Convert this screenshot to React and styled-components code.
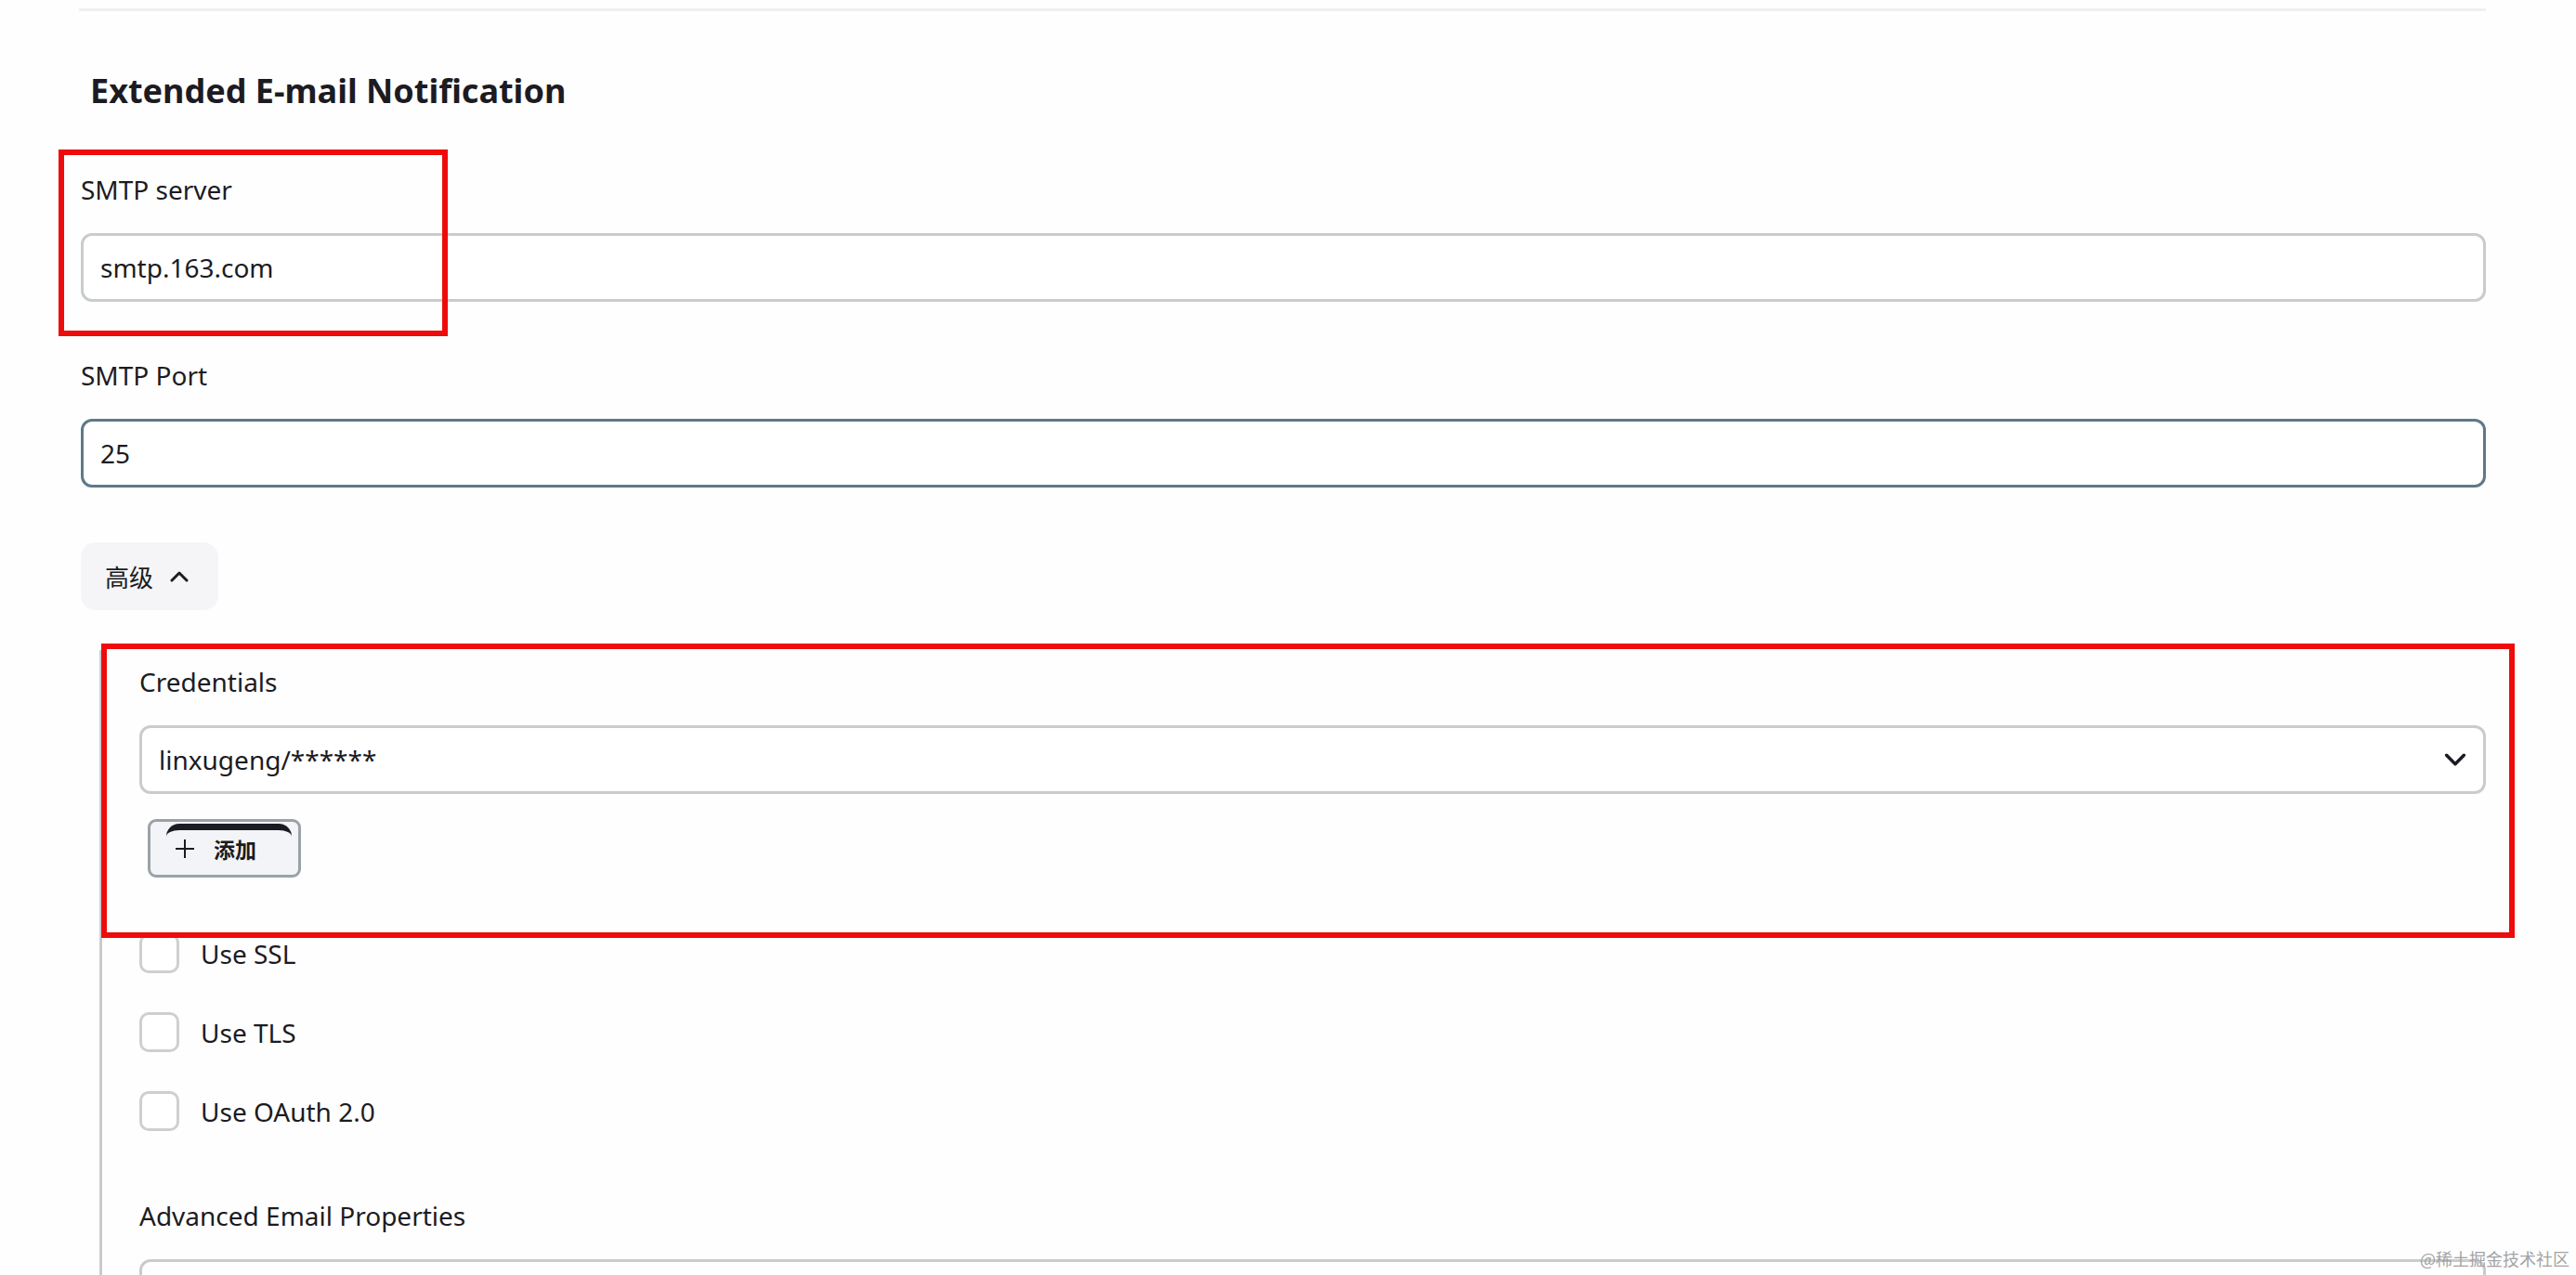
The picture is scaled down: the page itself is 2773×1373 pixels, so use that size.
import React from "react";
import styled, { createGlobalStyle } from "styled-components";

const Global = createGlobalStyle`
  html, body {
    margin: 0;
    padding: 0;
    background: #fefefe;
    overflow: hidden;
  }
  body {
    font-family: "Noto Sans", "Noto Sans CJK SC", sans-serif;
    color: #1c1b22;
  }
  * { box-sizing: border-box; }
`;

const Page = styled.div`
  position: relative;
  height: 1373px;
  padding: 0 97px 0 87px;
  overflow: hidden;
`;

const Separator = styled.div`
  margin: 9px 0 0 -2px;
  height: 3px;
  background: #eff0f2;
`;

const Heading = styled.h2`
  margin: 62px 0 0 10px;
  font-size: 36px;
  font-weight: 700;
  line-height: 48px;
`;

const Field = styled.div`
  position: relative;
  margin-top: ${(p) => p.$mt || 59}px;
`;

const Label = styled.div`
  font-size: 28px;
  line-height: 40px;
  margin-bottom: 27px;
`;

const Input = styled.div`
  height: 74px;
  border: 3px solid ${(p) => (p.$focused ? "#5e7989" : "#c9ccce")};
  border-radius: 12px;
  background: #fff;
  display: flex;
  align-items: center;
  padding: 0 18px;
  font-size: 28px;
  justify-content: space-between;
`;

const RedMark = styled.div`
  position: absolute;
  border: 6px solid #ee0b0b;
  pointer-events: none;
  z-index: 2;
  left: ${(p) => p.$l}px;
  top: ${(p) => p.$t}px;
  width: ${(p) => p.$w};
  height: ${(p) => p.$h}px;
`;

const AdvancedButton = styled.div`
  margin-top: 59px;
  width: 148px;
  height: 73px;
  border-radius: 16px;
  background: #f5f5f8;
  display: flex;
  align-items: center;
  gap: 18px;
  padding-left: 26px;
  font-size: 26px;
`;

const Nested = styled.div`
  position: relative;
  margin: 43px 0 0 20px;
  padding: 14px 0 0 40px;
  border-left: 3px solid #c9ccce;
  height: 700px;
`;

const AddButton = styled.div`
  position: relative;
  margin-top: 27px;
  width: 165px;
  height: 63px;
  border: 3px solid #9aa2a7;
  border-radius: 9px;
  background: #f3f4f7;
  display: flex;
  align-items: center;
  gap: 20px;
  padding-left: 26px;
  margin-left: 9px;
  font-size: 23px;
  font-weight: 700;
`;

const Arc = styled.span`
  position: absolute;
  left: 17px;
  right: 7px;
  top: 2px;
  height: 16px;
  border-top: 7px solid #1b1b24;
  border-radius: 14px 14px 0 0;
`;

const CheckList = styled.div`
  margin-top: 60px;
  display: flex;
  flex-direction: column;
  gap: 42px;
`;

const CheckRow = styled.label`
  display: flex;
  align-items: center;
  gap: 23px;
  font-size: 28px;
  height: 43px;
`;

const Box = styled.span`
  width: 43px;
  height: 43px;
  border: 3px solid #cdcfd1;
  border-radius: 10px;
  background: #fff;
  flex: none;
`;

const Watermark = styled.div`
  position: absolute;
  right: 7px;
  bottom: 5px;
  font-size: 18px;
  color: #a3a3a3;
  font-family: "Noto Sans CJK SC", sans-serif;
  z-index: 3;
`;

const Chevron = ({ up, w = 20, h = 12, sw = 3 }) => (
  <svg width={w} height={h} viewBox="0 0 20 12" fill="none">
    <path
      d={up ? "M2 10 L10 2 L18 10" : "M2 2 L10 10 L18 2"}
      stroke="#1c1b22"
      strokeWidth={sw}
      strokeLinecap="round"
      strokeLinejoin="round"
    />
  </svg>
);

const Plus = () => (
  <svg width="22" height="22" viewBox="0 0 22 22" fill="none">
    <path d="M11 1 V21 M1 11 H21" stroke="#1c1b22" strokeWidth="2" />
  </svg>
);

export default function App() {
  return (
    <>
      <Global />
      <Page>
        <Separator />
        <Heading>Extended E-mail Notification</Heading>

        <Field $mt={62}>
          <RedMark $l={-24} $t={-23} $w="419px" $h={201} />
          <Label>SMTP server</Label>
          <Input>smtp.163.com</Input>
        </Field>

        <Field>
          <Label>SMTP Port</Label>
          <Input $focused>25</Input>
        </Field>

        <AdvancedButton>
          高级
          <Chevron up w={20} h={12} sw={3} />
        </AdvancedButton>

        <Nested>
          <RedMark $l={-1} $t={-7} $w="calc(100% + 32px)" $h={317} />
          <Label>Credentials</Label>
          <Input>
            linxugeng/******
            <Chevron w={24} h={14} sw={3} />
          </Input>
          <AddButton>
            <Arc />
            <Plus />
            添加
          </AddButton>

          <CheckList>
            <CheckRow>
              <Box />
              Use SSL
            </CheckRow>
            <CheckRow>
              <Box />
              Use TLS
            </CheckRow>
            <CheckRow>
              <Box />
              Use OAuth 2.0
            </CheckRow>
          </CheckList>

          <Field $mt={71}>
            <Label>Advanced Email Properties</Label>
            <Input />
          </Field>
        </Nested>

        <Watermark>@稀土掘金技术社区</Watermark>
      </Page>
    </>
  );
}
